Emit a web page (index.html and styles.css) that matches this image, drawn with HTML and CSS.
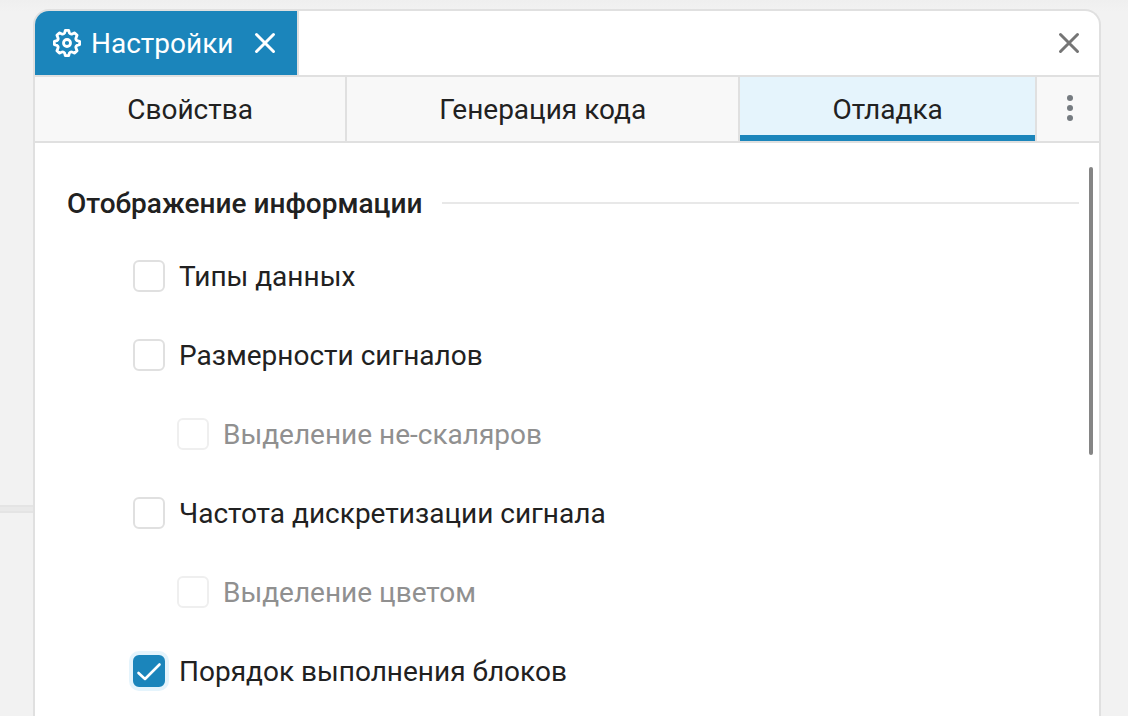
FILE: index.html
```html
<!DOCTYPE html>
<html lang="ru">
<head>
  <meta charset="UTF-8" />
  <meta name="viewport" content="width=device-width, initial-scale=1.0"/>
  <title>Настройки</title>
  <link rel="stylesheet" href="styles.css">
</head>
<body>
  <div class="workspace">
    <div class="gutter"><div class="splitter"></div></div>

    <main class="panel">
      <!-- Window tab -->
      <header class="panel-header">
        <div class="window-tab">
          <svg class="gear" viewBox="-14 -14 28 28" aria-hidden="true">
            <path d="M-1.700-12.600H1.700L2.400-10Q3.700-8.200 5.600-9.200L7.700-10.100L10.100-7.700L9.200-5.600Q8.200-3.700 10-2.400L12.600-1.700V1.700L10 2.400Q8.200 3.700 9.200 5.600L10.100 7.700L7.700 10.100L5.600 9.200Q3.700 8.200 2.400 10L1.700 12.600H-1.700L-2.400 10Q-3.700 8.200-5.600 9.200L-7.700 10.100L-10.100 7.700L-9.200 5.600Q-8.200 3.700-10 2.400L-12.600 1.700V-1.700L-10-2.400Q-8.200-3.700-9.200-5.600L-10.100-7.700L-7.700-10.100L-5.600-9.200Q-3.700-8.200-2.400-10Z"/>
            <circle r="3.5"/>
          </svg>
          <span class="window-title">Настройки</span>
          <button class="icon-button" type="button" aria-label="Закрыть вкладку">
            <svg class="cross" viewBox="0 0 24 24"><path d="M3.500 3.500L20.500 20.500M20.500 3.500L3.500 20.500"/></svg>
          </button>
        </div>
        <button class="icon-button close-panel" type="button" aria-label="Закрыть панель">
          <svg class="cross" viewBox="0 0 24 24"><path d="M3.500 3.500L20.500 20.500M20.500 3.500L3.500 20.500"/></svg>
        </button>
      </header>

      <nav class="tabs">
        <button class="tab" type="button">Свойства</button>
        <button class="tab" type="button">Генерация кода</button>
        <button class="tab active" type="button">Отладка</button>
        <button class="more" type="button" aria-label="Ещё">
          <svg viewBox="0 0 6 26"><circle cx="3" cy="3" r="3"/><circle cx="3" cy="13" r="3"/><circle cx="3" cy="23" r="3"/></svg>
        </button>
      </nav>

      <section class="content">
        <h2 class="section-title">Отображение информации</h2>
        <div class="options">
          <label class="option"><input type="checkbox"><span>Типы данных</span></label>
          <label class="option"><input type="checkbox"><span>Размерности сигналов</span></label>
          <label class="option nested"><input type="checkbox" disabled><span>Выделение не-скаляров</span></label>
          <label class="option"><input type="checkbox"><span>Частота дискретизации сигнала</span></label>
          <label class="option nested"><input type="checkbox" disabled><span>Выделение цветом</span></label>
          <label class="option">
            <input type="checkbox" checked>
            <svg class="check" viewBox="0 0 32 32" aria-hidden="true"><path d="M5.500 18L12 24L26.500 9.500"/></svg>
            <span>Порядок выполнения блоков</span>
          </label>
        </div>
        <div class="scrollbar"></div>
      </section>
    </main>
  </div>
</body>
</html>
```
FILE: styles.css
```css
* {
  box-sizing: border-box;
}
body {
  margin: 0;
  background: #f2f2f2;
  color: #212121;
  font-family: Roboto, sans-serif;
  font-size: 28px;
  line-height: 34px;
}
button {
  font: inherit;
  color: inherit;
  border: none;
  padding: 0;
  background: none;
  cursor: pointer;
}
.workspace {
  display: grid;
  grid-template-columns: 33px minmax(0, 1fr);
  height: 100vh;
  padding-right: 27px;
  overflow: hidden;
  background: linear-gradient(#efefef, #f2f2f2 12px);
}
.splitter {
  height: 8px;
  margin-top: 505px;
  background: #e9e9e9;
  border-top: 2px solid #e4e4e4;
  border-bottom: 2px solid #e4e4e4;
}
.panel {
  display: flex;
  flex-direction: column;
  margin-top: 9px;
  background: #fff;
  border: 2px solid #e0e0e0;
  border-bottom: none;
  border-radius: 16px 16px 0 0;
  overflow: hidden;
}

/* Header */
.panel-header {
  display: flex;
  align-items: stretch;
  justify-content: space-between;
  height: 66px;
  border-bottom: 2px solid #e0e0e0;
}
.window-tab {
  display: flex;
  align-items: center;
  padding: 0 20px 0 18px;
  background: #1b85bb;
  color: #fff;
  box-shadow: 2px 0 #e0e0e0;
}
.window-title {
  padding-top: 2px;
}
.gear {
  width: 28px;
  height: 28px;
  margin-right: 10px;
  fill: none;
  stroke: #fff;
  stroke-width: 2.8;
  stroke-linejoin: round;
}
.icon-button {
  display: flex;
  align-items: center;
  margin-left: 20px;
}
.cross {
  width: 24px;
  height: 24px;
  fill: none;
  stroke: currentColor;
  stroke-width: 3;
  stroke-linecap: round;
}
.close-panel {
  margin-right: 18px;
  color: #757575;
}

/* Tabs */
.tabs {
  display: flex;
  height: 66px;
  background: #f8f8f8;
  border-bottom: 2px solid #e0e0e0;
}
.tab {
  flex: 1 1 auto;
  padding-top: 2px;
  border-right: 2px solid #e0e0e0;
}
.tab.active {
  background: #e5f4fc;
  box-shadow: inset 0 -6px #1b85bb;
}
.more {
  display: flex;
  align-items: center;
  justify-content: center;
  width: 62px;
  padding: 0 0 2px 4px;
}
.more svg {
  width: 6px;
  height: 26px;
  fill: #757b80;
}

/* Options */
.content {
  position: relative;
  flex: 1;
  min-height: 0;
  padding: 44px 20px 0 32px;
  overflow: hidden;
}
.section-title {
  display: flex;
  align-items: center;
  gap: 20px;
  margin: 0;
  font-size: 28px;
  font-weight: 500;
}
.section-title::after {
  content: "";
  flex: 1;
  height: 2px;
  margin-bottom: 2px;
  background: #e8e8e8;
}
.options {
  display: flex;
  flex-direction: column;
  align-items: flex-start;
  gap: 45px;
  padding: 39px 0 0 66px;
}
.option {
  position: relative;
  display: flex;
  align-items: flex-start;
  gap: 14px;
}
.option.nested {
  margin-left: 44px;
  color: #909090;
}
.option input {
  appearance: none;
  width: 32px;
  height: 32px;
  margin: 0;
  background: #fff;
  border: 2px solid #e0e0e0;
  border-radius: 6px;
}
.option input:disabled {
  border-color: #efefef;
}
.option input:checked {
  background: #1b85bb;
  border-color: #1b85bb;
  box-shadow: 0 0 0 4px #e5f4fc;
}
.check {
  position: absolute;
  top: 0;
  left: 0;
  width: 32px;
  height: 32px;
  fill: none;
  stroke: #fff;
  stroke-width: 2.6;
  stroke-linecap: round;
  stroke-linejoin: round;
  pointer-events: none;
}
.scrollbar {
  position: absolute;
  top: 24px;
  right: 6px;
  width: 4px;
  height: 288px;
  background: #858585;
  border-radius: 2px;
}
```
